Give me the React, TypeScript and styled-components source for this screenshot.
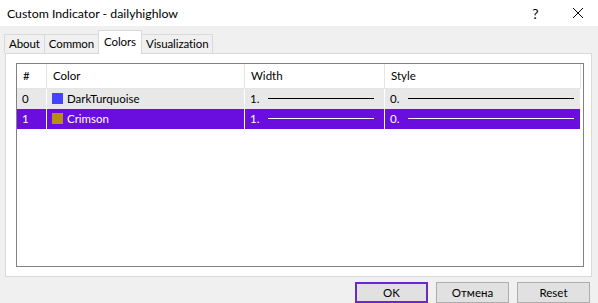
import React from 'react';
import styled, { createGlobalStyle } from 'styled-components';

type Row = {
  id: number;
  name: string;
  swatch: string;
  width: string;
  style: string;
};

const rows: Row[] = [
  { id: 0, name: 'DarkTurquoise', swatch: '#4444ff', width: '1.', style: '0.' },
  { id: 1, name: 'Crimson', swatch: '#b8900a', width: '1.', style: '0.' },
];

const tabs = ['About', 'Common', 'Colors', 'Visualization'];

const GlobalStyle = createGlobalStyle`
  html, body {
    margin: 0;
    padding: 0;
    background: #f0f0f0;
  }
  body {
    font-family: Lato, 'Noto Sans', 'Liberation Sans', sans-serif;
    font-size: 11.5px;
    color: #000000;
  }
`;

const Window = styled.div`
  width: 598px;
  height: 303px;
  display: flex;
  flex-direction: column;
  background: #f0f0f0;
  overflow: hidden;
`;

const TitleBar = styled.div`
  height: 26px;
  display: flex;
  align-items: center;
  background: #ffffff;
  padding-left: 7px;
`;

const Title = styled.div`
  flex: 1;
  font-size: 12.3px;
  color: #000000;
`;

const TitleButton = styled.div<{ $w: number }>`
  width: ${({ $w }) => $w}px;
  height: 26px;
  display: flex;
  align-items: center;
  justify-content: center;
  font-size: 14px;
`;

const TabRow = styled.div`
  display: flex;
  align-items: flex-end;
  height: 28px;
  padding-left: 5px;
`;

const Tab = styled.div<{ active?: boolean }>`
  height: 18px;
  padding: 0 4px;
  display: flex;
  align-items: center;
  background: #f0f0f0;
  border: 1px solid #d9d9d9;
  border-bottom: none;
  margin-left: -1px;
  position: relative;
  z-index: 1;
  letter-spacing: -0.1px;
  ${({ active }) =>
    active &&
    `
    background: #ffffff;
    z-index: 2;
    height: 21px;
    padding: 0 5px 2px 5px;
    margin-bottom: -1px;
  `}
`;

const Panel = styled.div`
  margin: 0 6px 0 5px;
  height: 216px;
  background: #ffffff;
  border: 1px solid #d9d9d9;
  padding: 9px 7px 9px 10px;
  display: flex;
`;

const ListBox = styled.div`
  flex: 1;
  border: 1px solid #828282;
  background: #ffffff;
  display: flex;
  flex-direction: column;
`;

const Grid = styled.div`
  display: grid;
  grid-template-columns: 30px 198px 140px 196px;
`;

const HeadCell = styled.div`
  height: 24px;
  display: flex;
  align-items: center;
  padding-left: 6px;
  border-right: 1px solid #e5e5e5;
  border-bottom: 1px solid #e5e5e5;
`;

const Cell = styled.div<{ selected?: boolean }>`
  height: 20px;
  display: flex;
  align-items: center;
  padding-left: 5px;
  gap: 4px;
  background: ${({ selected }) => (selected ? '#6a0ddf' : '#e8e8e8')};
  color: ${({ selected }) => (selected ? '#ffffff' : '#000000')};
  border-right: 1px solid #ffffff;
`;

const Swatch = styled.span<{ color: string }>`
  width: 11px;
  height: 11px;
  background: ${({ color }) => color};
  flex-shrink: 0;
`;

const LineSample = styled.span<{ selected?: boolean; inset: number }>`
  flex: 1;
  height: 1px;
  margin: 0 ${({ inset }) => inset}px 0 5px;
  background: ${({ selected }) => (selected ? '#ffffff' : '#000000')};
`;

const Footer = styled.div`
  display: flex;
  justify-content: flex-end;
  gap: 8px;
  padding: 5px 8px 0 0;
`;

const Button = styled.div<{ primary?: boolean }>`
  width: 73px;
  height: 21px;
  box-sizing: border-box;
  display: flex;
  align-items: center;
  justify-content: center;
  background: #e1e1e1;
  border: ${({ primary }) => (primary ? '2px solid #6a28d0' : '1px solid #adadad')};
`;

const CloseIcon = () => (
  <svg width="12" height="12" viewBox="0 0 12 12">
    <path d="M1 1 L11 11 M11 1 L1 11" stroke="#000" strokeWidth="1" />
  </svg>
);

export default function App() {
  return (
    <Window>
      <GlobalStyle />
      <TitleBar>
        <Title>Custom Indicator - dailyhighlow</Title>
        <TitleButton $w={45}>?</TitleButton>
        <TitleButton $w={40}>
          <CloseIcon />
        </TitleButton>
      </TitleBar>
      <TabRow>
        {tabs.map((t) => (
          <Tab key={t} active={t === 'Colors'}>
            {t}
          </Tab>
        ))}
      </TabRow>
      <Panel>
        <ListBox>
          <Grid>
            <HeadCell>#</HeadCell>
            <HeadCell>Color</HeadCell>
            <HeadCell>Width</HeadCell>
            <HeadCell>Style</HeadCell>
            {rows.map((r) => {
              const sel = r.id === 1;
              return (
                <React.Fragment key={r.id}>
                  <Cell selected={sel}>{r.id}</Cell>
                  <Cell selected={sel}>
                    <Swatch color={r.swatch} />
                    {r.name}
                  </Cell>
                  <Cell selected={sel}>
                    {r.width}
                    <LineSample selected={sel} inset={10} />
                  </Cell>
                  <Cell selected={sel}>
                    {r.style}
                    <LineSample selected={sel} inset={6} />
                  </Cell>
                </React.Fragment>
              );
            })}
          </Grid>
        </ListBox>
      </Panel>
      <Footer>
        <Button primary>OK</Button>
        <Button>Отмена</Button>
        <Button>Reset</Button>
      </Footer>
    </Window>
  );
}
